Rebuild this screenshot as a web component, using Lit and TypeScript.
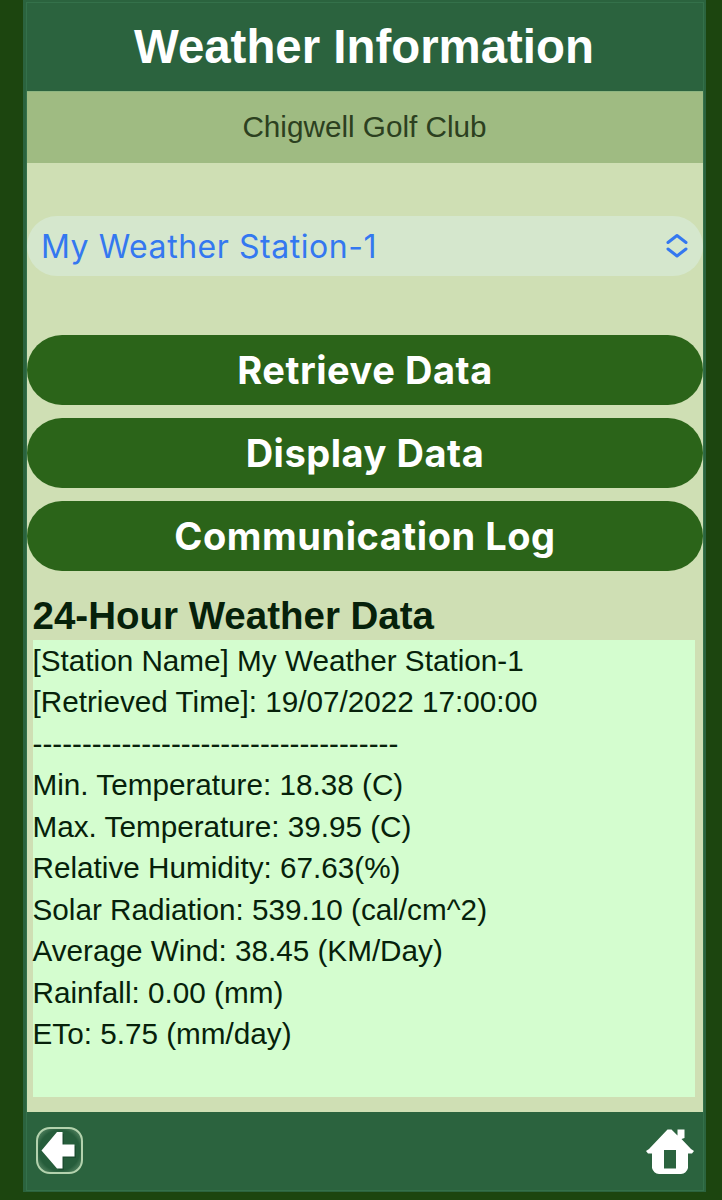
import { LitElement, html, css } from "lit";
import { customElement } from "lit/decorators.js";

@customElement("app-root")
export class AppRoot extends LitElement {
  static styles = css`
    :host {
      display: block;
      box-sizing: border-box;
      height: 1200px;
      padding: 0 16px 8px 23px;
      background: #1c450f;
      font-family: "Liberation Sans", Arial, sans-serif;
      color: #06210a;
      overflow: hidden;
    }
    .frame {
      box-sizing: border-box;
      height: 1192px;
      background: #2b633e;
      display: flex;
      flex-direction: column;
      padding-top: 2px;
    }
    .page {
      flex: 1;
      min-height: 0;
      border: 1px solid #34714a;
      margin: 0 2px 1px 3px;
      display: flex;
      flex-direction: column;
    }
    .header {
      height: 88px;
      flex: none;
      box-sizing: border-box;
      padding: 0 2px 2px 0;
      display: flex;
      align-items: center;
      justify-content: center;
      color: #fff;
      font-size: 47.4px;
      font-weight: 700;
      white-space: nowrap;
    }
    .club {
      height: 72px;
      flex: none;
      display: flex;
      align-items: center;
      justify-content: center;
      background: #9fbb82;
      color: #2c401f;
      font-size: 29.7px;
      box-sizing: border-box;
      padding: 0 1px 2px 0;
      border-top: 1px solid #8db580;
    }
    .content {
      flex: 1;
      min-height: 0;
      background: #cfdfb4;
      display: flex;
      flex-direction: column;
    }
    .select {
      margin-top: 53px;
      height: 60px;
      flex: none;
      box-sizing: border-box;
      padding: 0 14px 0 14px;
      border-radius: 30px;
      background: #d5e7cd;
      color: #3478f0;
      font: 400 32px/60px Inter, sans-serif;
      letter-spacing: 0.54px;
      display: flex;
      align-items: center;
      justify-content: space-between;
    }
    .select span {
      padding-top: 2px;
    }
    .buttons {
      margin-top: 59px;
      display: flex;
      flex-direction: column;
      gap: 13px;
    }
    .btn {
      height: 70px;
      padding: 1px 0 0;
      border: 0;
      border-radius: 35px;
      background: #2b6419;
      color: #fff;
      font: 700 38px/69px Inter, sans-serif;
      letter-spacing: 0.54px;
      text-align: center;
    }
    .heading {
      margin: 20px 0 0 5.5px;
      font-size: 38.5px;
      line-height: 49px;
      font-weight: 700;
      white-space: nowrap;
    }
    .data {
      margin: 0 8px 15px 6px;
      flex: 1;
      min-height: 0;
      background: #d4fdcf;
      font-size: 29.7px;
      line-height: 41.5px;
      white-space: nowrap;
    }
    .lines {
      margin: -0.5px 0 0 -0.5px;
    }
    .footer {
      height: 78px;
      flex: none;
      box-sizing: border-box;
      padding: 0 9px 0 8px;
      display: flex;
      align-items: center;
      justify-content: space-between;
    }
    svg {
      display: block;
      flex: none;
    }
  `;

  private lines = [
    "[Station Name] My Weather Station-1",
    "[Retrieved Time]: 19/07/2022 17:00:00",
    "-------------------------------------",
    "Min. Temperature: 18.38 (C)",
    "Max. Temperature: 39.95 (C)",
    "Relative Humidity: 67.63(%)",
    "Solar Radiation: 539.10 (cal/cm^2)",
    "Average Wind: 38.45 (KM/Day)",
    "Rainfall: 0.00 (mm)",
    "ETo: 5.75 (mm/day)",
  ];

  render() {
    return html`
      <div class="frame">
        <div class="page">
          <div class="header">Weather Information</div>
          <div class="club">Chigwell Golf Club</div>
          <div class="content">
            <div class="select">
              <span>My Weather Station-1</span>
              <svg width="24" height="26" viewBox="0 0 24 26" fill="none" stroke="#3478f0" stroke-width="3" stroke-linecap="round" stroke-linejoin="round">
                <path d="M3 9.500 12 2.500 21 9.500M3 16 12 23 21 16" />
              </svg>
            </div>
            <div class="buttons">
              ${["Retrieve Data", "Display Data", "Communication Log"].map(
                (t) => html`<button class="btn">${t}</button>`
              )}
            </div>
            <div class="heading">24-Hour Weather Data</div>
            <div class="data">
              <div class="lines">${this.lines.map((l) => html`<div>${l}</div>`)}</div>
            </div>
          </div>
          <div class="footer">
            <svg width="50" height="50" viewBox="0 0 50 50">
              <defs>
                <radialGradient id="g" cx=".5" cy=".5" r=".68">
                  <stop offset=".66" stop-color="#265d3b" />
                  <stop offset="1" stop-color="#6f9a78" />
                </radialGradient>
              </defs>
              <rect x="2" y="2" width="45" height="45" rx="13" fill="url(#g)" stroke="#b3d2ad" stroke-width="2" />
              <path d="M9 26 23 8h6v12h12v12H29v12h-5Z" fill="#174229" opacity=".6" />
              <path d="M6.500 24.500 22 6H27.500V18.500H39.500V30.500H27.500V42.500H22Z" fill="#fff" />
            </svg>
            <svg width="48" height="48" viewBox="0 0 48 48">
              <path fill="#fff" fill-rule="evenodd" d="M0 24 3 22 21.500 2.500H25.500L31.500 8.500V2.500H38.500V11L35.500 12 45 22 48 24 46 26.500H42V41Q40.500 46.500 35 47H13Q7.500 46.500 6 41V26.500H2ZM18 23V41.500H30V23Z" />
            </svg>
          </div>
        </div>
      </div>
    `;
  }
}
